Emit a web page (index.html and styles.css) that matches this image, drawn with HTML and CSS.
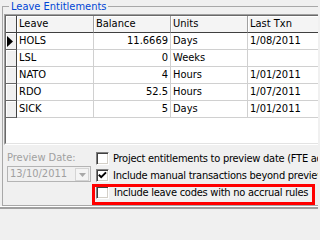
FILE: index.html
```html
<!DOCTYPE html>
<html>
<head>
<meta charset="utf-8">
<link rel="stylesheet" href="styles.css">
</head>
<body>
<fieldset class="group">
  <legend class="legend">Leave Entitlements</legend>
  <div class="grid">
    <div class="grid-inner">
      <div class="row head">
        <div class="ind"></div>
        <div class="cell">Leave</div>
        <div class="cell">Balance</div>
        <div class="cell">Units</div>
        <div class="cell">Last Txn</div>
      </div>
      <div class="row">
        <div class="ind"><svg class="cur" width="6" height="11" viewBox="0 0 6 11"><polygon points="0,0 6,5.5 0,11" fill="#000"/></svg></div>
        <div class="cell">HOLS</div>
        <div class="cell num">11.6669</div>
        <div class="cell">Days</div>
        <div class="cell">1/08/2011</div>
      </div>
      <div class="row">
        <div class="ind"></div>
        <div class="cell">LSL</div>
        <div class="cell num">0</div>
        <div class="cell">Weeks</div>
        <div class="cell"></div>
      </div>
      <div class="row">
        <div class="ind"></div>
        <div class="cell">NATO</div>
        <div class="cell num">4</div>
        <div class="cell">Hours</div>
        <div class="cell">1/01/2011</div>
      </div>
      <div class="row">
        <div class="ind"></div>
        <div class="cell">RDO</div>
        <div class="cell num">52.5</div>
        <div class="cell">Hours</div>
        <div class="cell">1/07/2011</div>
      </div>
      <div class="row">
        <div class="ind"></div>
        <div class="cell">SICK</div>
        <div class="cell num">5</div>
        <div class="cell">Days</div>
        <div class="cell">1/01/2011</div>
      </div>
    </div>
  </div>
  <div class="options">
    <div class="preview">
      <div class="preview-label">Preview Date:</div>
      <div class="combo">
        <span class="combo-text">13/10/2011</span>
        <span class="combo-btn"><svg width="7" height="4" viewBox="0 0 7 4"><polygon points="0,0 7,0 3.5,4" fill="#a8a8a8"/></svg></span>
      </div>
    </div>
    <div class="checks">
      <div class="check"><span class="box"></span><span class="label">Project entitlements to preview date (FTE adjusted)</span></div>
      <div class="check"><span class="box"><svg width="11" height="11" viewBox="0 0 11 11"><polyline points="1.8,4.8 4.2,7.2 9,2.4" fill="none" stroke="#000" stroke-width="2"/></svg></span><span class="label">Include manual transactions beyond preview date</span></div>
      <div class="check"><span class="box"></span><span class="label last">Include leave codes with no accrual rules</span></div>
    </div>
  </div>
</fieldset>
<div class="edge"></div>
<div class="highlight"></div>
</body>
</html>
```
FILE: styles.css
```css
* { box-sizing: border-box; }
html, body { margin: 0; padding: 0; }
body {
  position: relative;
  width: 318px;
  height: 209px;
  overflow: hidden;
  background: #f0f0f0;
  color: #000;
  font-family: "DejaVu Sans Condensed", "Liberation Sans", sans-serif;
  font-size: 11px;
}
.group {
  margin: 0 0 0 2px;
  padding: 0 0 4px 0;
  border: 1px solid #a8a8a8;
  width: 360px;
  min-width: 0;
}
.legend {
  margin-left: 6px;
  padding: 0 2px;
  height: 13px;
  line-height: 13px;
  color: #0046d5;
}
.grid {
  margin: 1px 0 0 1px;
  width: 356px;
  border: 1px solid;
  border-color: #a0a0a0 #fff #fff #a0a0a0;
}
.grid-inner {
  height: 129px;
  border: 1px solid;
  border-color: #696969 #e3e3e3 #e3e3e3 #696969;
  background: #fff;
}
.row {
  display: grid;
  grid-template-columns: 11px 77px 77px 77px 1fr;
  height: 17px;
}
.cell {
  border-right: 1px solid #d0d0d0;
  border-bottom: 1px solid #d0d0d0;
  padding: 0 2px;
  line-height: 16px;
  white-space: nowrap;
  overflow: hidden;
}
.num { text-align: right; }
.ind {
  display: flex;
  align-items: center;
  padding-left: 1px;
  background: #f0f0f0;
  border-right: 1px solid #404040;
  border-bottom: 1px solid #696969;
  box-shadow: inset 1px 1px #fff;
}
.head .cell {
  background: #f4f4f4;
  border-right-color: #a0a0a0;
  border-bottom-color: #404040;
  box-shadow: inset 1px 1px #fff;
}
.head .ind { border-bottom-color: #404040; }
.options {
  display: flex;
  margin-top: 5px;
}
.preview {
  width: 93px;
  flex: none;
  padding-left: 4px;
}
.preview-label {
  margin-top: 1px;
  line-height: 13px;
  color: #a0a0a0;
  white-space: nowrap;
}
.combo {
  margin-top: 2px;
  width: 84px;
  height: 16px;
  display: flex;
  align-items: flex-start;
  justify-content: space-between;
  padding-left: 2px;
  border: 1px solid #b4b4b4;
  color: #a0a0a0;
}
.combo-text { line-height: 14px; }
.combo-btn {
  margin: 1px 1px 0 0;
  width: 14px;
  height: 13px;
  display: flex;
  align-items: center;
  justify-content: center;
  border: 1px solid #d4d4d4;
  background: #f4f4f4;
}
.checks {
  display: flex;
  flex-direction: column;
}
.check {
  display: flex;
  align-items: center;
  gap: 4px;
  height: 17px;
  white-space: nowrap;
}
.label { letter-spacing: -0.25px; }
.label.last { margin-left: 1px; }
.box {
  width: 13px;
  height: 13px;
  flex: none;
  display: flex;
  border: 1px solid;
  border-color: #808080 #fff #fff #808080;
  box-shadow: inset 1px 1px #404040, inset -1px -1px #d4d0c8;
  background: #fff;
}
.edge {
  height: 3px;
  border-top: 1px solid #fff;
  background: #a0a0a0;
}
.highlight {
  position: absolute;
  left: 92px;
  top: 184px;
  width: 223px;
  height: 21px;
  border: 3px solid #ff0000;
}
```
